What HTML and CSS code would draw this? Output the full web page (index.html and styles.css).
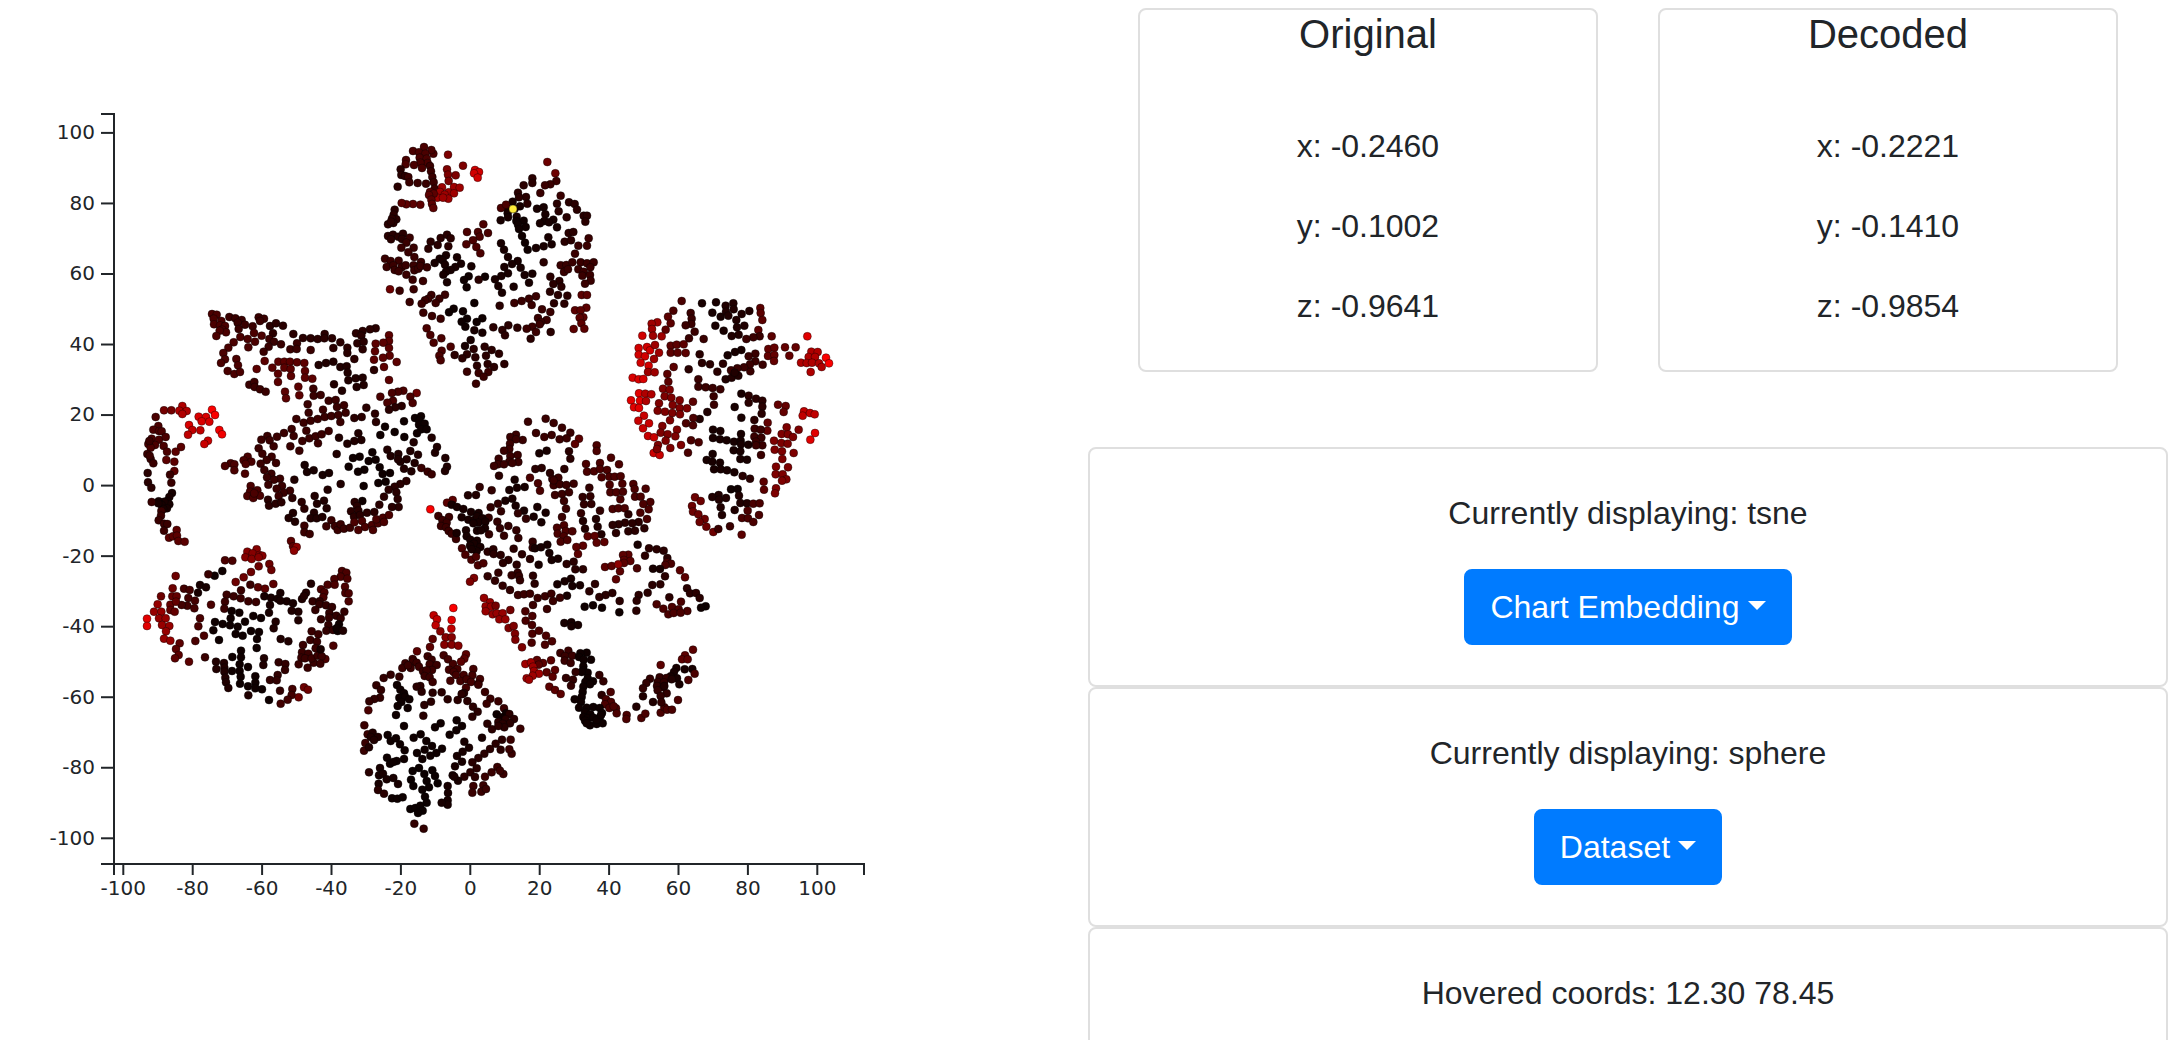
FILE: index.html
```html
<!DOCTYPE html>
<html lang="en">
<head>
<meta charset="utf-8">
<title>Embedding explorer</title>
<link rel="stylesheet" href="styles.css">
</head>
<body>
<main class="page">
  <section class="plot">
    <svg class="chart" id="chart" width="1040" height="1040" viewBox="0 0 1040 1040"></svg>
  </section>
  <section class="panel">
    <div class="vectors">
      <article class="card vector">
        <h4 class="card-title">Original</h4>
        <div class="card-body">
          <p>x: -0.2460</p>
          <p>y: -0.1002</p>
          <p>z: -0.9641</p>
        </div>
      </article>
      <article class="card vector">
        <h4 class="card-title">Decoded</h4>
        <div class="card-body">
          <p>x: -0.2221</p>
          <p>y: -0.1410</p>
          <p>z: -0.9854</p>
        </div>
      </article>
    </div>
    <div class="controls">
      <article class="card"><div class="card-body">
        <p>Currently displaying: tsne</p>
        <button class="btn" type="button">Chart Embedding</button>
      </div></article>
      <article class="card"><div class="card-body">
        <p>Currently displaying: sphere</p>
        <button class="btn" type="button">Dataset</button>
      </div></article>
      <article class="card"><div class="card-body">
        <p>Hovered coords: 12.30 78.45</p>
      </div></article>
    </div>
  </section>
</main>
<script src="chart.js"></script>
</body>
</html>
```
FILE: styles.css
```css
* { box-sizing: border-box; }
html { overflow: hidden; }
body {
  margin: 0;
  background: #fff;
  color: #212529;
  font: 32px/1.5 "Liberation Sans", Arial, sans-serif;
}
.page {
  display: grid;
  grid-template-columns: 1088px 1080px;
  height: 1040px;
  overflow: hidden;
}
.chart { display: block; }
.axis path, .axis line { stroke: #212529; stroke-width: 2; fill: none; }
.axis text { fill: #212529; font: 20px "DejaVu Sans", sans-serif; }
.axis-left text { text-anchor: end; }
.axis-bottom text { text-anchor: middle; }
.dots circle { stroke: #000; stroke-width: 0.5; stroke-opacity: 0.75; }
.panel { padding-top: 8px; }
.vectors {
  display: grid;
  grid-template-columns: 460px 460px;
  justify-content: center;
  gap: 60px;
  margin-bottom: 75px;
}
.card {
  border: 2px solid #dfdfdf;
  border-radius: 8px;
  background: #fff;
  text-align: center;
}
.card-title {
  margin: 0 0 24px;
  font-size: 40px;
  font-weight: 400;
  line-height: 48px;
}
.card-body { padding: 40px; }
.card-body p { margin: 0 0 32px; }
.vector .card-body p:last-child { margin-bottom: 0; }
.btn {
  display: block;
  margin: 0 auto;
  padding: 12px 24px;
  border: 2px solid #007bff;
  border-radius: 8px;
  background: #007bff;
  color: #fff;
  font: inherit;
}
.btn::after {
  content: "";
  display: inline-block;
  margin-left: 0.255em;
  vertical-align: 0.255em;
  border-top: 0.3em solid;
  border-right: 0.3em solid transparent;
  border-left: 0.3em solid transparent;
}
```
FILE: chart.js
```js
// Each cluster: origin on the canvas, then x y pairs in thirds of a pixel.
// A token such as #50 sets the red level (hex) of the dots that follow.
const clusters = [
  { origin: [370, 130], dots: `
    #40 162 51 129 63 147 67 190 71 184 60 166 71 149 83 170 86 108 90 173 99 151 98 132 105 107 103 156 114
    #20 92 118 94 135 105 138 83 170
    #30 115 141 118 157 143 159 168 161 180 108 183 124 187 141 191 157 194 176
    #70 234 74 279 107 231 118 234 134 257 136 236 153
    #c0 315 120 327 126 312 130 323 143
    #90 252 171 269 173 216 172 236 187 252 190 210 186 224 194 235 206 202 203 219 203
    #50 180 186 191 191 177 195 184 209 186 222 190 234 151 224 129 222 109 223 95 219
    #20 74 239 71 254 79 268 66 266 70 279 54 283 63 275 54 318 69 314 85 320 63 328 99 311 96 327
    #30 119 323 109 338 94 353 131 353 115 367 133 381 153 396 131 406 45 386 62 393 86 392 50 411 70 406 74 420 95 412 107 406 86 424 109 434 133 421 145 416 152 408 171 412 128 449 159 453 131 478 89 482 119 516
    #60 60 478
    #20 182 335 175 356 203 345 212 324 231 314 242 325 235 349
    #10 228 376 261 382 209 386 194 399 218 391 225 404 273 401 256 411 242 420 228 425 220 434 231 457 304 409
    #08 296 439 282 450 290 472 345 440
    #20 326 449
    #40 340 283 291 306 324 306 354 309 329 320 309 331 289 343 319 351 331 370
    #60 532 96 556 130
    #30 559 153 541 163 525 166 511 189 572 197
    #20 487 145 487 159 461 166 444 188 468 201 447 202 472 221
    #10 428 215 450 229 434 236 413 236 413 250 440 260 392 271 414 262
    #40 393 234 408 224
    #08 439 273 461 272 444 284 467 291 447 297 456 318 465 338 473 359
    #10 498 354 521 349 535 322 545 343 501 236 521 232 526 253 550 269 523 273 537 277 510 280 561 292
    #20 561 221 566 244 590 262 597 217 614 222 621 239 641 257 651 257 646 275 596 309 610 306 584 335 603 331
    #30 656 325 625 347 651 347 615 371 572 406 589 405 607 397 582 426 594 418 632 397 651 400 671 397 625 418 641 425 661 412 637 437 660 435 662 452 645 461
    #10 393 340 402 359 414 381 443 393 426 402 403 411 452 413 414 430 394 438 375 448 464 435 487 431 477 458 385 468 396 488 431 470
    #20 521 397 541 440 568 453 550 462 574 470 540 485 564 495 592 497 552 520 583 521 389 527
    #30 498 499 477 506 455 513 433 519 485 525 516 538 541 546 504 564 530 570 513 576 509 583 487 590 498 606 470 596
    #20 442 593 415 586 397 600 405 616 370 592 482 626 542 606
    #50 635 495 651 495 649 533 615 541 632 541 640 562 629 563 634 580 611 597 643 596
    #30 225 494 184 495 175 506 208 506 165 511 197 519 155 521 160 548 186 558 212 566
    #08 251 536 237 547 279 544 291 566 275 575 286 590 337 565 320 576 313 519
    #10 313 601 337 608 302 630 285 648
    #40 170 595 181 615 191 638 214 625 215 662 208 677 212 691 242 650
    #20 311 657 344 650 365 660 387 671 254 675 291 673 277 685 316 682 348 677 403 702 353 702 372 711 321 707
    #30 355 726 326 729 341 740 291 725 318 761` },
  { origin: [200, 290], dots: `
    #40 36 72 50 74 41 86 42 103 64 93 60 106 75 108 67 119 78 127 59 122 49 138
    #30 88 81 106 85 125 90 113 98 135 104 116 117 158 109 176 82 192 86 180 93
    #20 210 108 228 100 249 107 219 130 280 132 309 144 332 145 353 147 374 132 373 145 396 145 421 157 442 173 442 189 400 174 463 207
    #40 121 141 143 147 162 129 165 155 185 137 145 172 101 157 85 173 70 189 75 208 63 219 109 207 114 226 83 243 103 252 120 246
    #30 208 147 222 155 206 170 191 185 243 163 291 160 271 178 290 177 332 180
    #50 170 237 194 213 217 233 235 215 253 215 270 215 291 217 313 219 253 233 234 251 272 237 315 243 273 258 315 263 234 276 337 266 295 290 255 305 298 316 258 325
    #30 148 284 163 276 164 291 180 298 197 305
    #18 356 225 378 219 400 215 421 231 440 229 443 248 445 271 467 265 488 263 491 285 470 291 402 283 426 302
    #30 340 296 341 317 362 315 386 332 407 330 323 343 369 359 411 351 432 346 326 368 437 368
    #20 527 115 510 118 488 123 468 130 484 137 472 160 491 155 488 178
    #50 567 136 567 153 550 158 527 161 567 174 525 184 569 197 549 203 522 209 590 216 552 231 567 270
    #20 522 240
    #60 650 309
    #40 610 302 594 305 576 309 541 320 631 320 579 332 562 338 638 339
    #20 605 348 586 352 567 359 499 353 485 381 463 384 525 371 528 396
    #30 289 387 311 398 332 392 353 387 374 381 394 378 415 375 421 396 319 422 275 417 281 438 252 429 231 440
    #30 307 453 328 445 347 439 365 433 386 423 354 460 271 469 298 482
    #08 555 410 612 394 584 426 541 435 613 441 645 384 663 379 658 392 657 404 674 401 664 418 680 418 651 430
    #18 417 443 475 430 484 450 463 453 442 461 410 492
    #18 695 443 641 457 711 471 705 488 631 483 654 494 736 504 741 530 735 543 644 519 620 508 601 515 612 536 634 544
    #30 664 534 683 545 695 553
    #08 517 487 479 500 459 504 446 530 506 513 527 509 539 532 493 539 474 545 570 549 548 552 557 575 535 579 491 588 487 633
    #18 562 479 572 498 595 492 594 508
    #20 619 573 601 582 584 590 566 599 589 607 552 620 593 627 538 644 596 651 576 651
    #30 202 438 184 449 209 451 221 469 176 475 187 491 215 500 200 510 182 521 228 519 193 540 214 551 201 562 240 566 222 569 205 584 246 588 230 596 270 602 251 608 236 618
    #40 143 500 131 511 154 515 137 522 92 520 75 528 103 523 103 541 135 551
    #40 152 588 172 601 150 605 142 618 160 624 180 617 163 610
    #20 204 629 207 647 227 641 244 637 277 624 305 636 313 656
    #10 314 525 321 546 341 541 368 555 387 549
    #18 422 582 383 599 283 569 344 618 372 632 351 641 380 655 279 669 266 684 285 695 342 668 332 685 350 685 367 681
    #30 313 707 313 727 329 732 394 691 379 709 405 708 413 720 422 703 432 716 450 713
    #20 464 636 471 648 453 664 475 662 462 680 501 668 523 666 480 675
    #40 486 693 463 697 495 711 475 720 516 705 534 700 519 720 529 688 549 683 567 675 552 696
    #50 273 753 279 769
    #80 290 771 282 782` },
  { origin: [620, 285], dots: `
    #40 185 48 160 77
    #10 246 55 288 52 277 83 302 95 286 122 311 137
    #18 340 55 317 62 341 73 318 80 325 92 388 78 365 87 349 105 373 122 351 127 356 149 335 153
    #50 421 69 422 84 427 105 415 135 455 154
    #30 419 154 400 157 379 162
    #50 144 95 152 115 137 134
    #90 112 112 95 116 96 132 99 152 125 154
    #c0 67 152 56 189 81 186 90 196 56 209 75 214 62 233 86 242
    #90 105 180 117 203 102 222 84 261 104 262
    #c8 38 278 56 283 70 282
    #30 212 84 215 101 214 117 197 121 224 140 207 160 251 162
    #50 152 182 170 179 191 178 152 203 173 203 197 204
    #20 239 208 246 234 270 238 206 253 309 236 292 260
    #10 364 195 345 201 323 211
    #30 406 206 386 214 406 229 428 239 391 259 390 238 372 247 352 250 333 256
    #18 317 283 335 278 355 272 344 263
    #58 445 192 463 188 444 213 463 210 462 228 495 187 527 187 508 212
    #d0 562 154
    #a0 574 200 593 201 566 216 585 216 543 233 560 234 576 233 597 235 605 246 572 261
    #e8 618 218 627 235
    #50 161 246 142 267 145 290
    #70 129 311 149 314 134 334 154 338 117 355 158 360 179 346 113 377 135 380 157 384 179 369 201 370 180 388 150 406
    #50 219 350
    #30 235 283 235 305 257 307 278 309 301 313 281 334 282 359
    #18 262 381 239 402
    #40 220 399 198 415 219 421
    #d0 33 346 57 325 60 347 42 367 57 369
    #a0 76 326 94 328 78 348
    #b8 72 392 55 407 87 415 69 430 84 453 102 457 101 504 119 510
    #70 127 423 122 443 171 434 143 448 166 454 137 467 114 480 151 489 183 480 111 492
    #40 213 466 236 472 204 503
    #10 364 326 344 366 364 398 279 434 301 438 363 447
    #20 386 332 408 341 427 347 386 353 427 365 425 386 403 405
    #58 443 413 442 437 474 359 497 363 491 381
    #30 404 431 422 434 403 455 424 458 408 470 427 481 408 481 423 510
    #10 279 459 300 463 320 466 342 470 362 467 363 478 385 479 341 496 361 499 361 522 381 524
    #10 278 507 260 525 277 530 300 533 282 553 302 553 321 556 343 562
    #20 368 573 390 581
    #b0 552 379 548 392 570 384 584 388
    #d0 585 444 571 464
    #70 500 427 536 434 485 447 504 448 519 456 462 467 484 474 503 476 464 494 486 499 521 504 487 522 468 545 504 547 467 568 488 568 499 583 486 587 468 610 465 625
    #50 431 590 432 614
    #08 333 613 353 612
    #18 357 632 361 654 381 655 344 675
    #40 400 656 419 655 383 677 417 690 366 699 384 700 400 711
    #18 296 630 277 636 297 644 318 639 302 667 306 690
    #60 225 637 242 648 216 663 219 680 235 688 254 702 239 711 259 725 280 741
    #30 295 732 330 724
    #50 365 749` },
  { origin: [420, 405], dots: `
    #30 324 50 377 41 401 54 426 68 451 83 348 84 395 90 373 96 419 103 440 100
    #50 477 101 465 117
    #30 288 89 271 96 308 105 288 103 270 116 268 132 252 137 293 150 271 153 236 161 268 170 295 171 234 178 222 183 252 178 277 174
    #10 380 137 358 145
    #20 447 139 451 161 433 192 365 189 346 192 390 204 237 212
    #40 530 121 530 138 573 158 597 178
    #40 498 177 540 174 501 200 522 199 540 192 561 195 545 217 568 215 584 215 602 214 569 239 607 236 571 262 589 262 609 260 640 237 677 251 644 252 645 275 662 275 691 291 601 283 670 297 686 313 578 312 595 310 614 310 661 323 681 342
    #30 415 218 397 222 401 241 419 238 461 236 439 240 405 270 426 267 447 262 401 226 432 288 438 311 426 336
    #40 330 218 354 235 360 257
    #10 284 224 268 255 291 248 314 246 277 281 256 287 287 302 312 317 352 306 377 323 364 352 341 335
    #28 179 246 215 256 234 296 212 307 243 319 294 325 318 341 232 350 206 338
    #18 144 271 168 270
    #50 98 285 81 293
    #10 95 299 111 306 130 312 153 321 176 324 125 337 145 344 164 344 171 334 187 340 175 353 196 350 160 355 195 370 171 377 183 376 138 376
    #f8 31 313
    #30 55 333 87 336 67 345 80 353 63 363 78 367 86 378 95 386 108 402
    #10 110 384 140 394 151 404 171 407 162 416 150 422 181 426 170 438 155 433
    #28 207 388 265 363 240 370 289 376 252 392 295 399 338 410 338 428
    #40 126 430 136 449 154 464 168 455 174 481 190 475
    #20 203 440 220 433 221 447 242 450 265 465 249 474 281 431 290 479 306 448 330 462
    #10 382 419 345 430 363 427 388 444 356 479 395 465 414 461
    #40 432 361 411 368 437 378 413 386 457 379 431 394 422 410 442 405
    #20 440 477 461 470 466 493 489 493
    #28 508 248 488 276 511 274 492 298 514 297 483 325 540 317
    #18 489 348 528 342 495 371 533 365 544 388
    #50 503 394 524 393 553 411 530 413 489 422 469 426 474 447
    #20 625 328 656 351 637 355 615 353 596 358 578 360 588 384 625 379 645 377 673 370
    #10 653 419
    #20 687 430 710 433 731 437 675 452 742 459
    #40 741 472 753 476 736 480 651 490
    #50 780 496 795 517
    #10 699 491 720 492
    #20 735 514 721 538 697 540 683 563 656 570 650 587 649 617
    #50 625 449 609 450 612 465 631 468 612 474 555 486 575 483 600 499 588 523
    #80 595 478
    #20 801 550 810 565 828 564 839 579 748 577
    #08 857 604 843 608
    #40 783 590 710 598 730 611 756 606 776 613 802 618 745 628 761 624 782 623
    #28 235 503 203 514 225 527 248 542 270 555 293 503 275 511 297 513 300 526
    #70 162 519 150 530
    #10 453 521 434 529 412 538 457 543 480 541 441 572
    #20 339 512 344 536 525 537 508 559
    #30 294 570 312 568 330 566 353 579 375 574 394 566 420 578 399 588
    #20 577 564 557 570 538 576 599 588
    #08 494 605 519 601 546 608 598 622
    #30 381 612 339 600
    #88 192 579 210 592 197 604 213 605 197 619 218 628 230 625 248 625 238 643 256 643
    #68 227 602 271 615
    #40 316 619 337 633 317 647 336 660 337 686 335 713 357 677 378 692 396 709 375 719
    #70 266 669 281 663 285 686 286 704 306 727
    #10 433 654 454 652 474 660 454 664
    #30 445 737 421 744 435 753 457 752 434 767 452 774
    #08 500 743 481 745 477 756 491 764 513 764 490 784 490 796 503 803 485 801 503 820 496 831 519 829 510 838 490 845 488 861 485 876 483 891 464 883
    #28 467 801 438 819 459 824 453 842 538 810 550 829
    #50 393 766 369 774 351 765 356 779 380 802 405 795 398 815
    #90 316 777 333 772 339 785 342 798 357 806 338 812 320 820 327 824
    #50 388 845 405 855 422 867
    #20 545 870
    #40 572 861 558 883 573 891 555 898 568 909 588 910 590 925 581 904
    #08 477 908 500 908 520 906 539 909 495 921 546 924 490 936 511 928 503 940 520 938 539 938 495 947 510 961 530 957 548 955 500 955 530 945 543 930
    #40 620 930 619 942 664 939 676 926
    #18 649 905 669 874 699 891
    #50 819 734 795 751 786 763 803 763 722 780
    #10 817 792 794 793 769 789 762 801 752 814 771 820 778 838
    #40 824 806 805 825 774 885 722 923 733 907 741 914 756 914
    #28 690 821 679 834 669 850 719 817 713 831 739 819 711 843 730 847 713 856 740 865 722 873 724 892 732 832
    #18 755 823 733 843` },
  { origin: [135, 395], dots: `
    #40 62 66 70 93 55 104 72 108 80 109 50 131 72 134 92 126 60 150 40 147 47 158 86 153 96 170
    #68 87 46 109 46
    #a0 142 33 133 47 155 48 142 57
    #50 138 156 122 170 94 195 118 200 118 228
    #30 37 177 47 192 55 205 43 138 44 182
    #20 38 234 39 262 49 278
    #30 105 239 109 263
    #10 111 294 103 306 97 318 103 328 88 320 71 319 80 330 96 340 85 342 70 325
    #30 50 321 79 348 78 362 71 376 87 386 97 387 87 407
    #50 125 405 102 428 114 424 126 422 130 438 149 440
    #c8 162 90 191 65 213 66 200 79 223 80
    #b0 172 105 196 106 159 119
    #f0 231 44 240 60
    #e0 253 105 261 118
    #b8 219 137 208 147
    #78 337 470 365 463 353 475 331 487 350 492 373 480 382 482 371 487
    #40 292 497 270 496
    #60 371 514 403 507 409 525 348 531 326 547 302 561
    #08 262 528 239 542
    #30 220 538
    #60 122 543 113 580 78 604
    #38 147 581 164 585 160 609 180 617 157 632 140 630 178 640
    #58 112 604 125 604 106 629 123 620 106 645 119 650
    #88 68 628 57 650 79 650 72 670 92 670 81 690 103 693 93 709 87 731 106 737
    #d0 36 671 36 693
    #10 195 570 213 577 189 593
    #40 228 629 195 670 190 694 207 722 181 738
    #50 134 745 123 762 131 780 120 790 162 800
    #30 210 787
    #30 318 586 346 569 275 599 296 604 317 610 270 620 340 619 268 641 363 621
    #50 369 577 390 581 415 567
    #10 436 594 388 604 408 608 428 611 405 630 402 653 455 619 474 625 436 617
    #08 290 648 313 653 287 670 240 681 263 687 285 691 308 695 235 706 330 680 355 663 378 669 302 717 323 722 348 708 372 711 366 732 365 759 252 735
    #18 422 680 416 700 437 732 460 739
    #18 513 593 501 612 528 566 490 650 470 647 490 676 507 603
    #40 621 528 634 533 617 545 598 552 637 551 578 569 599 569 558 583 568 592 630 575 565 607 631 594 641 595 641 619
    #28 533 619 554 619 553 628 573 631 591 636 541 645 628 650 583 654 604 662 582 668 558 673 617 670 580 690 574 707 594 705
    #08 612 688 608 708 605 700
    #18 624 707
    #40 595 752 571 792
    #30 530 709 550 718 526 735 546 740 504 750 542 760 501 772 520 776 499 788 491 808 510 790 518 818 536 803 530 790 548 782 560 784 556 806
    #10 557 763
    #08 318 767 292 786 318 787 314 808 314 828 339 816 291 828 361 844 317 845 315 866 361 863 339 874 361 880 381 883 402 915
    #18 243 800 267 804 244 822 268 818 268 830 387 790 385 810 271 848 273 862 280 879 340 901
    #28 431 802 451 807 450 825 428 840 405 855 425 856 435 887
    #38 472 882 470 900 458 914 437 926
    #60 507 877 519 884 491 907` },
  { origin: [350, 590], dots: `
    #f8 310 54
    #d0 305 90
    #b0 251 76 261 88 257 106 304 116
    #78 271 124 287 142 305 142 283 164 305 164 325 167
    #50 248 147 240 171 201 184
    #30 188 207 166 220 190 213 200 218 157 234 182 234 174 226 207 230 219 244 233 199 245 209 239 223 260 225 246 240 230 241 224 258 239 262 248 276
    #50 348 193 343 206 333 215
    #38 281 196 294 208 309 222 297 239 322 237 311 246 318 255 301 272 370 237 341 255 367 256 331 273 350 268 363 276 390 267 385 281 348 293
    #28 122 254 101 264 148 260 79 286 93 300 90 323 73 327 58 334
    #40 55 361
    #08 141 285 151 299 162 310 148 323 165 320 178 328 154 336 143 348 173 354 138 375 162 408
    #20 211 288 200 290 215 305 248 308 275 307 243 335 223 345 293 328 220 377 342 309 337 312
    #20 323 330 335 312 352 333 369 350 383 365 367 380
    #30 405 306 421 326 410 341 445 334 462 355 385 284
    #08 440 373 468 370 452 382
    #20 478 372 492 387 467 388 480 400 445 396 458 401 463 412 412 401 426 418 445 408
    #30 511 416 482 449 485 491 478 478
    #30 43 406 53 433 46 459 42 482
    #18 68 428 62 441 84 441 72 450 57 472
    #08 113 435 122 453 138 445 150 463 164 481 162 507 111 503 140 513 120 521 130 516
    #08 272 400 255 412 212 433 191 443 229 453 246 468 276 476 224 479 201 489 259 489 241 497 217 507 320 391 336 408 319 421 299 434
    #10 396 443 343 455 357 473 338 485 321 498 336 515 315 529
    #20 456 449 437 461 452 479 420 477 403 491 385 504 367 517 380 535 361 547 343 560 375 561
    #10 324 572 308 556 313 560
    #30 442 531 425 547 405 560 460 552 450 542
    #30 370 588 367 608 400 586 394 605 408 597
    #20 57 547
    #10 90 534 87 556 99 551 110 568 130 564 144 582 86 581
    #20 84 600 102 611
    #08 126 625 142 626 158 622
    #04 207 534 188 543 183 569 190 588 223 552 230 573 247 541 255 558 263 580 237 592 217 599 225 620 230 638
    #10 293 588 294 609 293 631 293 644 275 638
    #04 181 657 196 654 211 647 218 662 204 669
    #28 193 701 221 716` }
];

const NS = 'http://www.w3.org/2000/svg';
const chart = document.getElementById('chart');

function add(parent, name, attrs, text) {
  const el = document.createElementNS(NS, name);
  for (const key in attrs) el.setAttribute(key, attrs[key]);
  if (text !== undefined) el.textContent = text;
  parent.appendChild(el);
  return el;
}

const dots = add(chart, 'g', { class: 'dots' });
function dot(cx, cy, fill) {
  add(dots, 'circle', { cx: cx.toFixed(2), cy: cy.toFixed(2), r: 4, fill });
}
for (const { origin, dots: list } of clusters) {
  const tokens = list.trim().split(/\s+/);
  let red = 48;
  for (let i = 0; i < tokens.length; i++) {
    if (tokens[i][0] === '#') {
      red = Math.min(250, Math.round(parseInt(tokens[i].slice(1), 16) * 1.05 + 7));
      continue;
    }
    dot(origin[0] + tokens[i] / 3, origin[1] + tokens[++i] / 3, `rgb(${red}, 0, 0)`);
  }
}
dot(513, 209, '#ffeb3b');

const bottom = add(chart, 'g', { class: 'axis axis-bottom' });
const left = add(chart, 'g', { class: 'axis axis-left' });
add(bottom, 'path', { d: 'M114 875V864H864V875' });
add(left, 'path', { d: 'M101 114H114V864H101' });
for (let v = -100; v <= 100; v += 20) {
  const x = 470.3 + v * 3.47;
  const y = 485.6 - v * 3.527;
  add(bottom, 'line', { x1: x, x2: x, y1: 864, y2: 875 });
  add(bottom, 'text', { x, y: 895 }, v);
  add(left, 'line', { x1: 101, x2: 114, y1: y, y2: y });
  add(left, 'text', { x: 95, y: y + 6.4 }, v);
}
```
